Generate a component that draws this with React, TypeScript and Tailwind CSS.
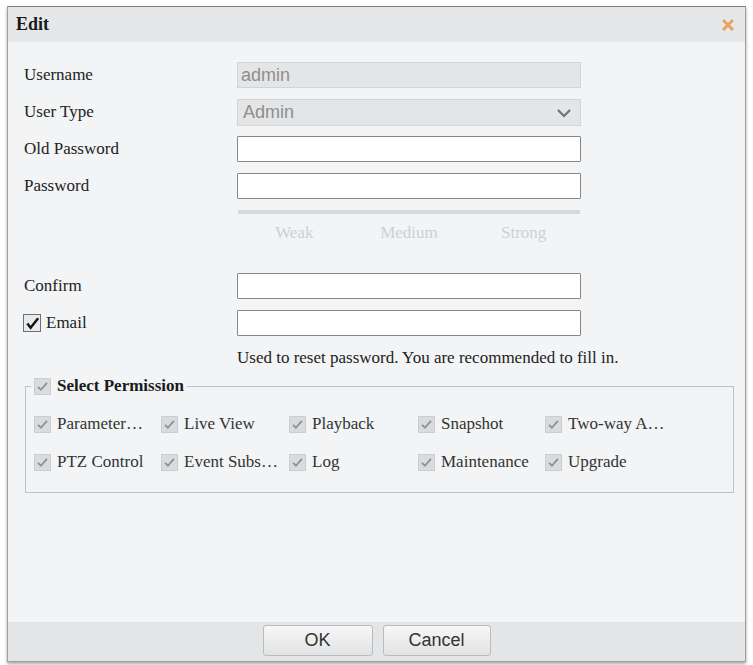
import React from "react";

const serif = { fontFamily: '"Liberation Serif", "Times New Roman", serif' };
const sans = { fontFamily: '"Liberation Sans", Arial, sans-serif' };

const GreyCheck = ({ size = 17 }: { size?: number }) => (
  <span
    className="inline-flex items-center justify-center bg-[#d9dbdc] border border-[#cbcdcf] shrink-0"
    style={{ width: size, height: size }}
  >
    <svg viewBox="0 0 16 16" className="w-[13px] h-[13px]">
      <polyline points="2.5,8.5 6,12 13.5,3.5" fill="none" stroke="#8e9092" strokeWidth="2.2" />
    </svg>
  </span>
);

const FormRow = ({ label, children }: { label: React.ReactNode; children: React.ReactNode }) => (
  <div className="flex h-[37px]">
    <div className="w-[229px] pl-[16px] h-[26px] flex items-center text-[17px] leading-[20px] text-[#222]">
      {label}
    </div>
    {children}
  </div>
);

const TextBox = () => (
  <div className="w-[344px] h-[26px] bg-white border border-[#86888a] rounded-[1px]" />
);

const perms = [
  ["Parameter…", "Live View", "Playback", "Snapshot", "Two-way A…"],
  ["PTZ Control", "Event Subs…", "Log", "Maintenance", "Upgrade"],
];
const colW = ["w-[127px]", "w-[128px]", "w-[129px]", "w-[127px]", "w-[130px]"];

export default function App() {
  return (
    <div className="w-[753px] h-[665px] bg-white pt-[6px] pl-[7px]" style={serif}>
      <div className="w-[739px] h-[656px] flex flex-col border border-[#9c9ea0] border-t-[#7d7f81] shadow-[0_2px_3px_rgba(0,0,0,0.35)]">
        {/* title */}
        <div className="h-[35px] bg-[#e5e7e9] flex items-center justify-between pl-[8px] pr-[10px]">
          <span className="text-[18px] font-bold text-[#1a1a1a]">Edit</span>
          <svg viewBox="0 0 14 14" className="w-[14px] h-[14px]">
            <line x1="2" y1="2" x2="12" y2="12" stroke="#e9a45e" strokeWidth="3" />
            <line x1="12" y1="2" x2="2" y2="12" stroke="#e9a45e" strokeWidth="3" />
          </svg>
        </div>

        {/* body */}
        <div className="flex-1 bg-[#f2f4f6] pt-[20px]">
          <FormRow label="Username">
            <div
              className="w-[344px] h-[26px] bg-[#e4e5e6] border border-[#d2d4d6] flex items-center pl-[3px] text-[18px] text-[#8e8e8e]"
              style={sans}
            >
              admin
            </div>
          </FormRow>
          <FormRow label="User Type">
            <div
              className="w-[344px] h-[27px] bg-[#e4e5e6] border border-[#d2d4d6] flex items-center justify-between pl-[5px] pr-[8px] text-[18px] text-[#8e8e8e]"
              style={sans}
            >
              <span>Admin</span>
              <svg viewBox="0 0 16 16" className="w-[16px] h-[16px]">
                <polyline points="2,5 8,11 14,5" fill="none" stroke="#6f7173" strokeWidth="2.2" />
              </svg>
            </div>
          </FormRow>
          <FormRow label="Old Password">
            <TextBox />
          </FormRow>
          <FormRow label="Password">
            <TextBox />
          </FormRow>

          {/* strength */}
          <div className="ml-[230px] w-[342px] h-[4px] bg-[#d6d8da]" />
          <div className="ml-[229px] w-[344px] mt-[9px] flex text-[17px] leading-[20px] text-[#cdd0d2]">
            <span className="flex-1 text-center">Weak</span>
            <span className="flex-1 text-center">Medium</span>
            <span className="flex-1 text-center">Strong</span>
          </div>

          <div className="mt-[30px]">
            <FormRow label="Confirm">
              <TextBox />
            </FormRow>
            <FormRow
              label={
                <span className="flex items-center -ml-[1px] gap-[5px]">
                  <span className="w-[18px] h-[18px] bg-[#e9eaeb] border border-[#6f7173] flex items-center justify-center">
                    <svg viewBox="0 0 16 16" className="w-[15px] h-[15px]">
                      <polyline points="2.5,8 6,12.5 14,2.5" fill="none" stroke="#111" strokeWidth="2.6" />
                    </svg>
                  </span>
                  Email
                </span>
              }
            >
              <TextBox />
            </FormRow>
          </div>

          <div className="pl-[229px] mt-[1px] text-[17px] leading-[20px] text-[#222]">
            Used to reset password. You are recommended to fill in.
          </div>

          {/* permissions */}
          <fieldset className="ml-[17px] w-[709px] mt-[8px] border border-[#bfc1c3] pb-[11px]">
            <legend className="ml-[5px] px-[3px] flex items-center gap-[6px] h-[20px] text-[17px] font-bold text-[#1a1a1a]">
              <GreyCheck />
              Select Permission
            </legend>
            <div className="pt-[9px] pl-[8px]">
              {perms.map((row, i) => (
                <div key={i} className="flex h-[38px] items-center">
                  {row.map((p, j) => (
                    <div key={p} className={`${colW[j]} flex items-center gap-[6px] text-[17px] text-[#333] whitespace-nowrap`}>
                      <GreyCheck />
                      {p}
                    </div>
                  ))}
                </div>
              ))}
            </div>
          </fieldset>
        </div>

        {/* footer */}
        <div className="h-[39px] bg-[#e3e5e7] border-t border-[#e0e2e4] flex items-start justify-center gap-[10px] pt-[2px]" style={sans}>
          <button className="w-[110px] h-[31px] rounded-[3px] border border-[#b9bbbd] bg-gradient-to-b from-[#f7f7f7] to-[#e2e3e4] text-[18px] text-[#333]">
            OK
          </button>
          <button className="w-[108px] h-[31px] rounded-[3px] border border-[#b9bbbd] bg-gradient-to-b from-[#f7f7f7] to-[#e2e3e4] text-[18px] text-[#333]">
            Cancel
          </button>
        </div>
      </div>
    </div>
  );
}
